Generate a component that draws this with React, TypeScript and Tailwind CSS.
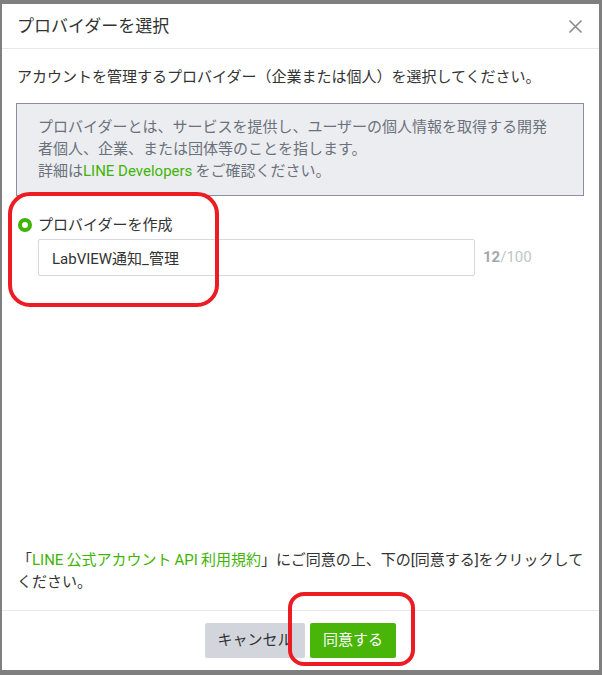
import React, { useState } from "react";

const font = { fontFamily: 'Roboto, "Noto Sans CJK JP", sans-serif' };

const App: React.FC = () => {
  const [name, setName] = useState("LabVIEW通知_管理");

  return (
    <div
      className="w-[602px] h-[675px] bg-[#7f7f7f] pt-[4px] pl-[2px] overflow-hidden relative"
      style={font}
    >
      {/* モーダル */}
      <div className="w-[597px] h-[666px] bg-white flex flex-col text-[#333]">
        <div className="h-[45px] flex items-center justify-between pl-[15px] pr-[16px] border-b border-[#e6e8eb]">
          <h2 className="text-[17px] leading-[22px]">プロバイダーを選択</h2>
          <svg width="15" height="15" viewBox="0 0 15 15" className="text-[#8a8a8a]">
            <path d="M1.5 1.5 L13.5 13.5 M13.5 1.5 L1.5 13.5" stroke="currentColor" strokeWidth="1.6" />
          </svg>
        </div>

        <div className="flex-1 flex flex-col px-[14px] pt-[17px] pb-[17px]">
          <p className="text-[15px] leading-[22px] pl-[1px]">
            アカウントを管理するプロバイダー（企業または個人）を選択してください。
          </p>

          <div className="mt-[15px] mr-[1px] bg-[#ebedf0] border border-[#8a90a0] pl-[21px] pt-[12px] pb-[13px] text-[15px] leading-[22px] text-[#6b717c]">
            プロバイダーとは、サービスを提供し、ユーザーの個人情報を取得する開発
            <br />
            者個人、企業、または団体等のことを指します。
            <br />
            詳細は<span className="text-[#3fb405]">LINE Developers</span>
            {"\u2009"}をご確認ください。
          </div>

          {/* プロバイダー作成 */}
          <div className="mt-[18px] flex items-center h-[22px]">
            <span className="w-[14px] h-[14px] ml-[2px] rounded-full border-[4px] border-[#3fb405] bg-white" />
            <span className="ml-[6px] text-[15px]">プロバイダーを作成</span>
          </div>
          <div className="mt-[3px] ml-[22px] flex items-center">
            <input
              value={name}
              onChange={(e) => setName(e.target.value)}
              className="w-[437px] h-[37px] border border-[#d5d8dd] rounded-[2px] px-[13px] text-[15px] text-[#333] outline-none"
              style={font}
            />
            <span className="ml-[8px] text-[15px]">
              <span className="font-bold text-[#a2a7ae]">{name.length}</span>
              <span className="text-[#c0c4ca]">/100</span>
            </span>
          </div>

          <p className="mt-auto text-[15px] leading-[22px] pl-[1px]">
            「
            <span className="text-[#3fb405]">
              LINE{"\u2009"}公式アカウント{"\u2009"}API{"\u2009"}利用規約
            </span>
            」にご同意の上、下の[同意する]をクリックして
            <br />
            ください。
          </p>
        </div>

        <div className="h-[60px] border-t border-[#e6e8eb] flex justify-center items-start pt-[12px] gap-[5px]">
          <button className="w-[100px] h-[35px] bg-[#d2d6dc] rounded-[2px] text-[15px] text-[#333]">
            キャンセル
          </button>
          <button className="w-[86px] h-[35px] bg-[#48b508] rounded-[2px] text-[15px] text-white">
            同意する
          </button>
        </div>
      </div>

      {/* 赤い注釈 */}
      <div className="absolute left-[8px] top-[192px] w-[211px] h-[115px] border-[4px] border-[#ed1c24] rounded-[22px] pointer-events-none" />
      <div className="absolute left-[288px] top-[592px] w-[127px] h-[74px] border-[4px] border-[#ed1c24] rounded-[16px] pointer-events-none" />
    </div>
  );
};

export default App;
